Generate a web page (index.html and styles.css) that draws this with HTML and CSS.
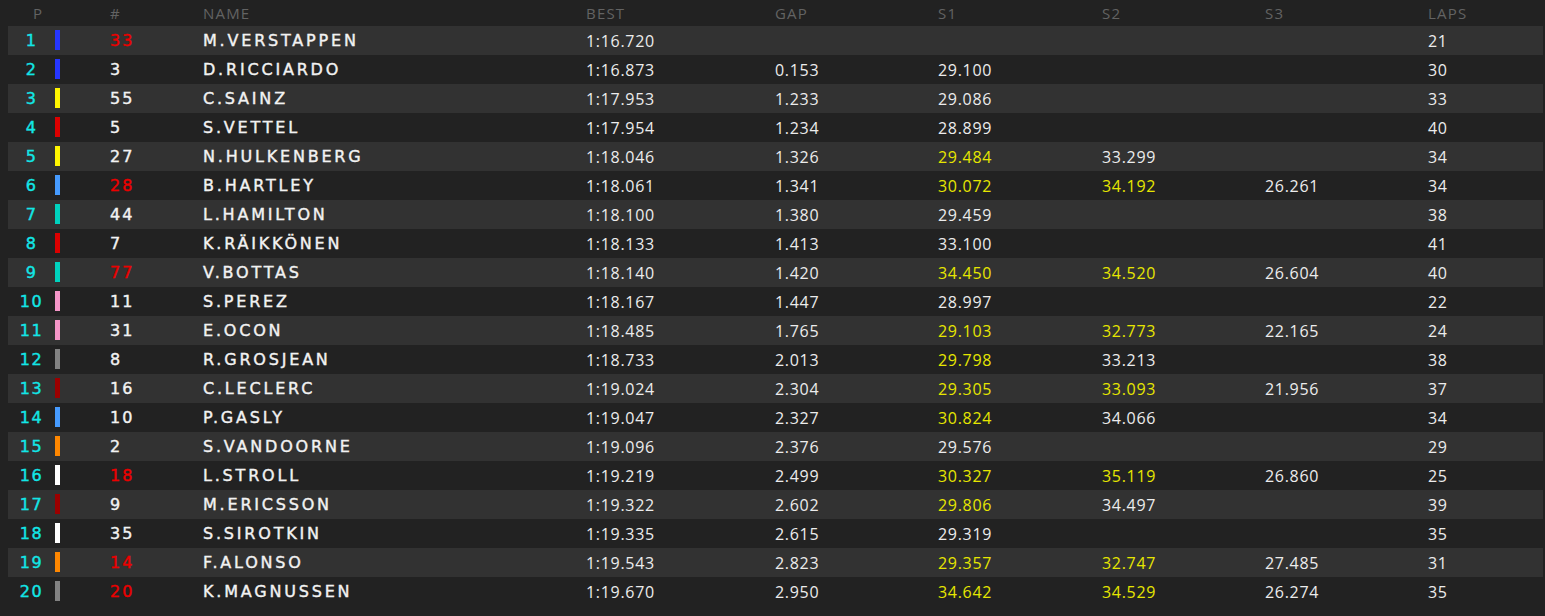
FILE: index.html
```html
<!DOCTYPE html>
<html lang="en">
<head>
<meta charset="utf-8">
<title>Timing</title>
<link rel="stylesheet" href="styles.css">
</head>
<body>
<div class="board">
  <div class="row head">
    <div class="c hp">P</div><div class="c"></div><div class="c"></div>
    <div class="c">#</div><div class="c">NAME</div><div class="c">BEST</div><div class="c">GAP</div>
    <div class="c">S1</div><div class="c">S2</div><div class="c">S3</div><div class="c">LAPS</div>
  </div>
  <div class="row"><div class="c pos">1</div><div class="c"><span class="bar rbr"></span></div><div class="c"></div><div class="c num red">33</div><div class="c name">M.VERSTAPPEN</div><div class="c t">1:16.720</div><div class="c t"></div><div class="c t"></div><div class="c t"></div><div class="c t"></div><div class="c t">21</div></div>
  <div class="row"><div class="c pos">2</div><div class="c"><span class="bar rbr"></span></div><div class="c"></div><div class="c num">3</div><div class="c name">D.RICCIARDO</div><div class="c t">1:16.873</div><div class="c t">0.153</div><div class="c t">29.100</div><div class="c t"></div><div class="c t"></div><div class="c t">30</div></div>
  <div class="row"><div class="c pos">3</div><div class="c"><span class="bar ren"></span></div><div class="c"></div><div class="c num">55</div><div class="c name">C.SAINZ</div><div class="c t">1:17.953</div><div class="c t">1.233</div><div class="c t">29.086</div><div class="c t"></div><div class="c t"></div><div class="c t">33</div></div>
  <div class="row"><div class="c pos">4</div><div class="c"><span class="bar fer"></span></div><div class="c"></div><div class="c num">5</div><div class="c name">S.VETTEL</div><div class="c t">1:17.954</div><div class="c t">1.234</div><div class="c t">28.899</div><div class="c t"></div><div class="c t"></div><div class="c t">40</div></div>
  <div class="row"><div class="c pos">5</div><div class="c"><span class="bar ren"></span></div><div class="c"></div><div class="c num">27</div><div class="c name">N.HULKENBERG</div><div class="c t">1:18.046</div><div class="c t">1.326</div><div class="c t y">29.484</div><div class="c t">33.299</div><div class="c t"></div><div class="c t">34</div></div>
  <div class="row"><div class="c pos">6</div><div class="c"><span class="bar str"></span></div><div class="c"></div><div class="c num red">28</div><div class="c name">B.HARTLEY</div><div class="c t">1:18.061</div><div class="c t">1.341</div><div class="c t y">30.072</div><div class="c t y">34.192</div><div class="c t">26.261</div><div class="c t">34</div></div>
  <div class="row"><div class="c pos">7</div><div class="c"><span class="bar mer"></span></div><div class="c"></div><div class="c num">44</div><div class="c name">L.HAMILTON</div><div class="c t">1:18.100</div><div class="c t">1.380</div><div class="c t">29.459</div><div class="c t"></div><div class="c t"></div><div class="c t">38</div></div>
  <div class="row"><div class="c pos">8</div><div class="c"><span class="bar fer"></span></div><div class="c"></div><div class="c num">7</div><div class="c name">K.RÄIKKÖNEN</div><div class="c t">1:18.133</div><div class="c t">1.413</div><div class="c t">33.100</div><div class="c t"></div><div class="c t"></div><div class="c t">41</div></div>
  <div class="row"><div class="c pos">9</div><div class="c"><span class="bar mer"></span></div><div class="c"></div><div class="c num red">77</div><div class="c name">V.BOTTAS</div><div class="c t">1:18.140</div><div class="c t">1.420</div><div class="c t y">34.450</div><div class="c t y">34.520</div><div class="c t">26.604</div><div class="c t">40</div></div>
  <div class="row"><div class="c pos">10</div><div class="c"><span class="bar fi"></span></div><div class="c"></div><div class="c num">11</div><div class="c name">S.PEREZ</div><div class="c t">1:18.167</div><div class="c t">1.447</div><div class="c t">28.997</div><div class="c t"></div><div class="c t"></div><div class="c t">22</div></div>
  <div class="row"><div class="c pos">11</div><div class="c"><span class="bar fi"></span></div><div class="c"></div><div class="c num">31</div><div class="c name">E.OCON</div><div class="c t">1:18.485</div><div class="c t">1.765</div><div class="c t y">29.103</div><div class="c t y">32.773</div><div class="c t">22.165</div><div class="c t">24</div></div>
  <div class="row"><div class="c pos">12</div><div class="c"><span class="bar has"></span></div><div class="c"></div><div class="c num">8</div><div class="c name">R.GROSJEAN</div><div class="c t">1:18.733</div><div class="c t">2.013</div><div class="c t y">29.798</div><div class="c t">33.213</div><div class="c t"></div><div class="c t">38</div></div>
  <div class="row"><div class="c pos">13</div><div class="c"><span class="bar sau"></span></div><div class="c"></div><div class="c num">16</div><div class="c name">C.LECLERC</div><div class="c t">1:19.024</div><div class="c t">2.304</div><div class="c t y">29.305</div><div class="c t y">33.093</div><div class="c t">21.956</div><div class="c t">37</div></div>
  <div class="row"><div class="c pos">14</div><div class="c"><span class="bar str"></span></div><div class="c"></div><div class="c num">10</div><div class="c name">P.GASLY</div><div class="c t">1:19.047</div><div class="c t">2.327</div><div class="c t y">30.824</div><div class="c t">34.066</div><div class="c t"></div><div class="c t">34</div></div>
  <div class="row"><div class="c pos">15</div><div class="c"><span class="bar mcl"></span></div><div class="c"></div><div class="c num">2</div><div class="c name">S.VANDOORNE</div><div class="c t">1:19.096</div><div class="c t">2.376</div><div class="c t">29.576</div><div class="c t"></div><div class="c t"></div><div class="c t">29</div></div>
  <div class="row"><div class="c pos">16</div><div class="c"><span class="bar wil"></span></div><div class="c"></div><div class="c num red">18</div><div class="c name">L.STROLL</div><div class="c t">1:19.219</div><div class="c t">2.499</div><div class="c t y">30.327</div><div class="c t y">35.119</div><div class="c t">26.860</div><div class="c t">25</div></div>
  <div class="row"><div class="c pos">17</div><div class="c"><span class="bar sau"></span></div><div class="c"></div><div class="c num">9</div><div class="c name">M.ERICSSON</div><div class="c t">1:19.322</div><div class="c t">2.602</div><div class="c t y">29.806</div><div class="c t">34.497</div><div class="c t"></div><div class="c t">39</div></div>
  <div class="row"><div class="c pos">18</div><div class="c"><span class="bar wil"></span></div><div class="c"></div><div class="c num">35</div><div class="c name">S.SIROTKIN</div><div class="c t">1:19.335</div><div class="c t">2.615</div><div class="c t">29.319</div><div class="c t"></div><div class="c t"></div><div class="c t">35</div></div>
  <div class="row"><div class="c pos">19</div><div class="c"><span class="bar mcl"></span></div><div class="c"></div><div class="c num red">14</div><div class="c name">F.ALONSO</div><div class="c t">1:19.543</div><div class="c t">2.823</div><div class="c t y">29.357</div><div class="c t y">32.747</div><div class="c t">27.485</div><div class="c t">31</div></div>
  <div class="row"><div class="c pos">20</div><div class="c"><span class="bar has"></span></div><div class="c"></div><div class="c num red">20</div><div class="c name">K.MAGNUSSEN</div><div class="c t">1:19.670</div><div class="c t">2.950</div><div class="c t y">34.642</div><div class="c t y">34.529</div><div class="c t">26.274</div><div class="c t">35</div></div>
</div>
</body>
</html>
```
FILE: styles.css
```css
html, body {
  margin: 0;
  padding: 0;
  background: #222222;
}
body {
  padding: 0 0 0 8px;
}
.board {
  width: 1535px;
}
.row {
  display: grid;
  grid-template-columns: 47px 5px 50px 93px 383px 189px 163px 164px 163px 163px 1fr;
  height: 29px;
  align-items: center;
}
.row:nth-child(even) {
  background: #323232;
}
.row.head {
  height: 26px;
  color: #636363;
  font-family: "Open Sans", "Liberation Sans", sans-serif;
  font-weight: 400;
  font-size: 15px;
  letter-spacing: 1.2px;
}
.c {
  white-space: nowrap;
}
.hp {
  padding-left: 25px;
}
.pos {
  text-align: center;
  color: #12e6e6;
  font-family: "DejaVu Sans", sans-serif;
  font-size: 16px;
  letter-spacing: 1.5px;
  -webkit-text-stroke: 0.4px currentColor;
}
.bar {
  display: block;
  width: 5px;
  height: 20px;
  margin-top: -1px;
}
.num, .name {
  font-family: "DejaVu Sans", sans-serif;
  font-size: 16px;
  color: #f2f2f2;
  -webkit-text-stroke: 0.4px currentColor;
}
.num { letter-spacing: 2px; }
.name { letter-spacing: 2.8px; }
.red { color: #ec0000; }
.t {
  font-family: "Open Sans", "Liberation Sans", sans-serif;
  font-size: 16px;
  letter-spacing: 0.7px;
  color: #ececec;
}
.t.y { color: #e6e600; }
.rbr { background: #2636ff; }
.ren { background: #fff500; }
.fer { background: #dc0000; }
.str { background: #469bff; }
.mer { background: #00d2be; }
.fi { background: #f596c8; }
.has { background: #828282; }
.sau { background: #9b0000; }
.mcl { background: #ff8700; }
.wil { background: #ffffff; }
```
